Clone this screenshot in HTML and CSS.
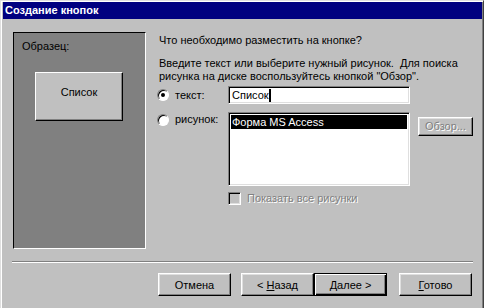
FILE: index.html
```html
<!DOCTYPE html>
<html>
<head>
	<title>Создание кнопок</title>
	<link rel="stylesheet" href="styles.css">
</head>

<body>
	<div class="window">
		<div class="titlebar">Создание кнопок</div>

		<div class="content">
			<div class="preview">
				<div class="preview-label">Образец:</div>
				<div class="sample">Список</div>
			</div>

			<div class="options">
				<p class="question">Что необходимо разместить на кнопке?</p>
				<p class="hint">Введите текст или выберите нужный рисунок.&nbsp; Для поиска<br>рисунка на диске воспользуйтесь кнопкой "Обзор".</p>

				<div class="row row-text">
					<span class="radio checked"></span>
					<span class="radio-label">текст:</span>
					<div class="textbox">Список<span class="caret"></span></div>
				</div>

				<div class="row row-picture">
					<span class="radio"></span>
					<span class="radio-label">рисунок:</span>
					<div class="listbox">
						<div class="list-item selected">Форма MS Access</div>
					</div>
					<div class="btn btn-small disabled"><span>Обзор...</span></div>
				</div>

				<div class="check-row">
					<span class="checkbox"></span>
					<span class="disabled">Показать все рисунки</span>
				</div>
			</div>
		</div>

		<div class="separator"></div>

		<div class="buttons">
			<div class="btn"><span>Отмена</span></div>
			<div class="btn btn-back"><span>&lt; <u>Н</u>азад</span></div>
			<div class="btn btn-default"><span><u>Д</u>алее &gt;</span></div>
			<div class="btn btn-finish"><span><u>Г</u>отово</span></div>
		</div>
	</div>
</body>
</html>
```

FILE: styles.css
```css
body {
	margin: 0;
	background: #c0c0c0;
	font-family: "Liberation Sans", Arial, sans-serif;
	font-size: 11px;
	color: #000;
}

p {
	margin: 0;
}

.window {
	width: 484px;
	height: 308px;
	box-sizing: border-box;
	border-top: 1px solid #dfdfdf;
	border-left: 1px solid #dfdfdf;
	border-right: 1px solid #404040;
	padding: 1px 1px 0 2px;
	box-shadow: inset 1px 1px #fff, inset -1px 0 #808080;
}

.titlebar {
	height: 17px;
	line-height: 17px;
	padding-left: 2px;
	background: #000080;
	color: #fff;
	font-weight: bold;
}

.content {
	display: flex;
	align-items: flex-start;
	padding: 13px 0 0 10px;
}

.preview {
	width: 133px;
	height: 217px;
	box-sizing: border-box;
	background: #808080;
	border: 1px solid;
	border-color: #000 #fff #fff #000;
	padding: 7px 0 0 8px;
}

.preview-label {
	line-height: 13px;
}

.sample {
	width: 88px;
	height: 49px;
	box-sizing: border-box;
	margin: 19px 0 0 13px;
	padding-top: 13px;
	text-align: center;
	line-height: 13px;
	background: #c0c0c0;
	border: 1px solid;
	border-color: #fff #000 #000 #fff;
	box-shadow: inset -1px -1px #808080;
}

.options {
	margin-left: 13px;
	padding-top: 2px;
	line-height: 13px;
}

.hint {
	margin-top: 10px;
}

.row {
	display: flex;
}

.row-text {
	align-items: center;
	height: 18px;
	margin-top: 3px;
}

.row-picture {
	align-items: flex-start;
	margin-top: 8px;
}

.radio {
	position: relative;
	width: 12px;
	height: 12px;
	box-sizing: border-box;
	margin-left: -2px;
	border-radius: 50%;
	background: #fff;
	border: 1px solid;
	border-color: #808080 #fff #fff #808080;
	box-shadow: inset 1px 1px #000;
}

.row-picture .radio {
	margin-top: 2px;
}

.radio.checked::after {
	content: "";
	position: absolute;
	left: 3px;
	top: 3px;
	width: 4px;
	height: 4px;
	border-radius: 50%;
	background: #000;
}

.radio-label {
	width: 53px;
	margin-left: 6px;
}

.row-picture .radio-label {
	margin-top: 1px;
}

.textbox,
.listbox {
	width: 182px;
	box-sizing: border-box;
	background: #fff;
	border: 1px solid;
	border-color: #808080 #fff #fff #808080;
	box-shadow: inset 1px 1px #000, inset -1px -1px #dfdfdf;
}

.textbox {
	height: 18px;
	padding: 2px 0 0 3px;
	display: flex;
	align-items: flex-start;
}

.caret {
	display: inline-block;
	width: 2px;
	height: 13px;
	background: #000;
}

.listbox {
	height: 74px;
	padding: 2px;
}

.list-item {
	height: 14px;
	line-height: 14px;
	padding-left: 1px;
}

.list-item.selected {
	background: #000;
	color: #fff;
}

.btn {
	width: 73px;
	height: 23px;
	box-sizing: border-box;
	display: flex;
	align-items: center;
	justify-content: center;
	background: #c0c0c0;
	border: 1px solid;
	border-color: #fff #000 #000 #fff;
	box-shadow: inset -1px -1px #808080, inset 1px 1px #dfdfdf;
}

.btn-small {
	width: 55px;
	height: 19px;
	margin: 5px 0 0 8px;
}

.btn-back {
	margin-left: 10px;
}

.btn-default {
	border-color: #000;
	box-shadow: inset 1px 1px #fff, inset -1px -1px #000, inset -2px -2px #808080;
}

.btn-finish {
	margin-left: 12px;
}

.disabled {
	color: #808080;
	text-shadow: 1px 1px #fff;
}

.check-row {
	display: flex;
	align-items: center;
	margin: 6px 0 0 69px;
}

.checkbox {
	width: 13px;
	height: 13px;
	box-sizing: border-box;
	margin-right: 6px;
	border: 1px solid;
	border-color: #808080 #fff #fff #808080;
	box-shadow: inset 1px 1px #000, inset -1px -1px #dfdfdf;
}

.separator {
	height: 0;
	margin: 12px 9px 0 9px;
	border-top: 1px solid #808080;
	border-bottom: 1px solid #fff;
}

.buttons {
	display: flex;
	padding: 10px 0 0 155px;
}
```
